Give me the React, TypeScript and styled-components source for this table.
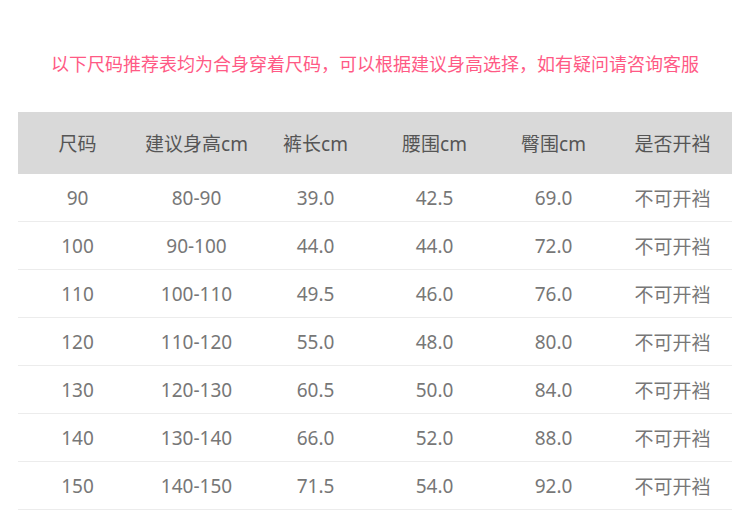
import React from "react";
import styled, { createGlobalStyle } from "styled-components";

const Global = createGlobalStyle`
  html, body { margin: 0; padding: 0; background: #fff; }
  body { font-family: "Noto Sans", "Noto Sans CJK SC", sans-serif; }
`;

const Page = styled.div`
  width: 750px;
  height: 510px;
  overflow: hidden;
  display: flex;
  flex-direction: column;
  align-items: center;
`;

const Notice = styled.p`
  margin: 0;
  height: 26px;
  margin-top: 50px;
  line-height: 26px;
  font-size: 18px;
  color: #ff5a85;
  text-align: center;
  font-family: "Noto Sans CJK SC", sans-serif;
`;

const Table = styled.div`
  margin-top: 36px;
  width: 714px;
  display: flex;
  flex-direction: column;
`;

const HeadRow = styled.div`
  display: grid;
  grid-template-columns: repeat(6, 1fr);
  height: 62px;
  background: #d9d9d9;
  align-items: center;
`;

const BodyRow = styled.div`
  display: grid;
  grid-template-columns: repeat(6, 1fr);
  height: 47px;
  border-bottom: 1px solid #ececec;
  align-items: center;
`;

const Cell = styled.div<{ $head?: boolean }>`
  text-align: center;
  font-size: 19px;
  color: ${(p) => (p.$head ? "#555" : "#777")};
  font-family: "Noto Sans", "Noto Sans CJK SC", sans-serif;
  white-space: nowrap;
`;

const headers = ["尺码", "建议身高cm", "裤长cm", "腰围cm", "臀围cm", "是否开裆"];
const rows = [
  ["90", "80-90", "39.0", "42.5", "69.0"],
  ["100", "90-100", "44.0", "44.0", "72.0"],
  ["110", "100-110", "49.5", "46.0", "76.0"],
  ["120", "110-120", "55.0", "48.0", "80.0"],
  ["130", "120-130", "60.5", "50.0", "84.0"],
  ["140", "130-140", "66.0", "52.0", "88.0"],
  ["150", "140-150", "71.5", "54.0", "92.0"],
];

export default function App() {
  return (
    <>
      <Global />
      <Page>
        <Notice>以下尺码推荐表均为合身穿着尺码，可以根据建议身高选择，如有疑问请咨询客服</Notice>
        <Table>
          <HeadRow>
            {headers.map((h) => (
              <Cell key={h} $head>
                {h}
              </Cell>
            ))}
          </HeadRow>
          {rows.map((r) => (
            <BodyRow key={r[0]}>
              {r.map((c, i) => (
                <Cell key={i}>{c}</Cell>
              ))}
              <Cell>不可开裆</Cell>
            </BodyRow>
          ))}
        </Table>
      </Page>
    </>
  );
}
